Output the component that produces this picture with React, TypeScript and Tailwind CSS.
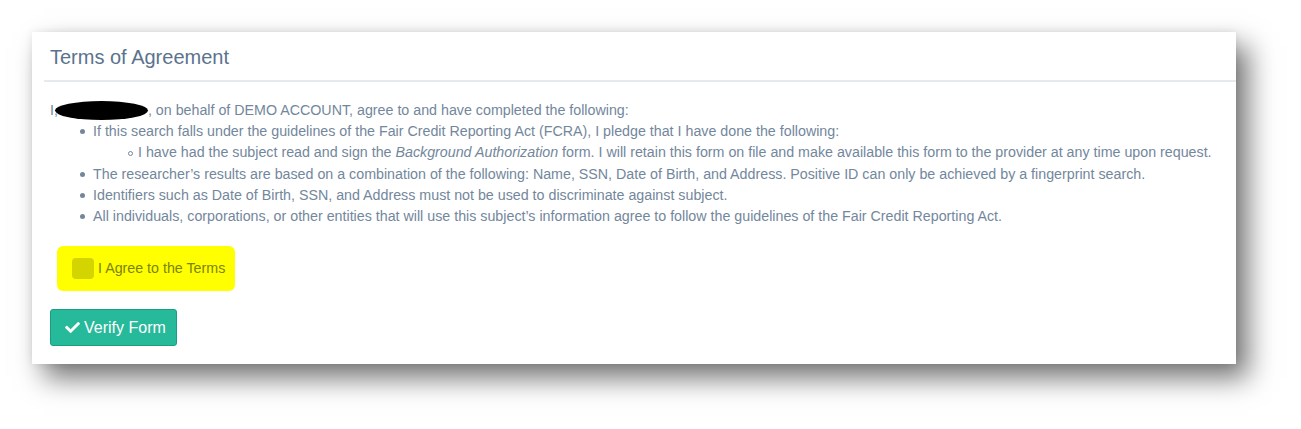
import { FaCheck } from 'react-icons/fa';

const bullets = [
  'The researcher\u2019s results are based on a combination of the following: Name, SSN, Date of Birth, and Address. Positive ID can only be achieved by a fingerprint search.',
  'Identifiers such as Date of Birth, SSN, and Address must not be used to discriminate against subject.',
  'All individuals, corporations, or other entities that will use this subject\u2019s information agree to follow the guidelines of the Fair Credit Reporting Act.',
];

function Disc({ hollow = false }: { hollow?: boolean }) {
  return hollow ? (
    <span className="mr-[5px] inline-block h-[5px] w-[5px] shrink-0 rounded-full border border-[#73879C]" />
  ) : (
    <span className="mr-[8px] inline-block h-[5px] w-[5px] shrink-0 rounded-full bg-[#73879C]" />
  );
}

export default function App() {
  return (
    <div className="min-h-screen bg-white p-[32px] font-['Liberation_Sans',Arial,sans-serif]">
      <div className="w-[1204px] bg-white shadow-[0_0_8px_rgba(0,0,0,0.08),12px_14px_26px_rgba(0,0,0,0.55)]">
        <div className="ml-[12px] flex h-[50px] items-center border-b-2 border-[#E6E9ED] pl-[6px] pt-[2px]">
          <h2 className="text-[20px] text-[#5A738E]">Terms of Agreement</h2>
        </div>

        <div className="px-[18px] pt-[18px] pb-[18px] text-[14.25px] leading-[21.2px] whitespace-nowrap text-[#73879C]">
          <p className="flex items-center">
            <span>I,</span>
            <span className="-ml-[3px] inline-block h-[19px] w-[93px] rounded-[50%] bg-black" />
            <span>, on behalf of DEMO ACCOUNT, agree to and have completed the following:</span>
          </p>
          <ul className="pl-[30px]">
            <li className="flex items-center">
              <Disc />
              If this search falls under the guidelines of the Fair Credit Reporting Act (FCRA), I pledge that I
              have done the following:
            </li>
            <li className="flex items-center pl-[48px]">
              <Disc hollow />
              <span>
                I have had the subject read and sign the <em>Background Authorization</em> form. I will retain
                this form on file and make available this form to the provider at any time upon request.
              </span>
            </li>
            {bullets.map((b) => (
              <li key={b} className="flex items-center">
                <Disc />
                {b}
              </li>
            ))}
          </ul>

          <div className="mt-[19px] ml-[7px] flex h-[45px] w-[178px] items-center gap-[4px] rounded-[6px] bg-[#ffff00] pl-[15px]">
            <span className="inline-block h-[21px] w-[22px] rounded-[4px] bg-[#d4d400]" />
            <span className="text-[#7a8410]">I Agree to the Terms</span>
          </div>

          <button
            type="button"
            className="mt-[18px] flex h-[37px] w-[127px] items-center gap-[4px] rounded-[3px] border border-[#169F85] bg-[#26B99A] pl-[14px] text-[16px] text-white"
          >
            <FaCheck className="h-[15px] w-[15px]" />
            Verify Form
          </button>
        </div>
      </div>
    </div>
  );
}
